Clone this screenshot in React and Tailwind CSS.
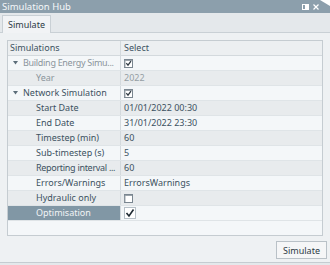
import React from 'react';

const rows = [
  { label: 'Building Energy Simu...', value: 'check', level: 0, expand: true, muted: true, tight: true },
  { label: 'Year', value: '2022', level: 1, muted: true },
  { label: 'Network Simulation', value: 'check', level: 0, expand: true },
  { label: 'Start Date', value: '01/01/2022 00:30', level: 1 },
  { label: 'End Date', value: '31/01/2022 23:30', level: 1 },
  { label: 'Timestep (min)', value: '60', level: 1 },
  { label: 'Sub-timestep (s)', value: '5', level: 1 },
  { label: 'Reporting interval ...', value: '60', level: 1, tight: true },
  { label: 'Errors/Warnings', value: 'ErrorsWarnings', level: 1 },
  { label: 'Hydraulic only', value: 'box', level: 1 },
  { label: 'Optimisation', value: 'edit', level: 1, selected: true },
];

function SmallCheck({ checked }) {
  return (
    <svg width="9" height="9" viewBox="0 0 9 9" className="block">
      <rect x="0.5" y="0.5" width="8" height="8" fill="#ffffff" stroke="#7a8690" />
      <path d="M1 1.5 H8 M1 1.5 V8" stroke="#9aa3aa" />
      {checked && <path d="M2.3 4.2 L4 6.2 L7 2.2" fill="none" stroke="#2f3a42" strokeWidth="1.3" />}
    </svg>
  );
}

function EditCheck() {
  return (
    <svg width="12" height="12" viewBox="0 0 12 12" className="block">
      <rect x="0.5" y="0.5" width="11" height="11" fill="#ffffff" stroke="#b7c0c7" />
      <path d="M2.5 6 L5 9 L9.5 2.5" fill="none" stroke="#1f2a33" strokeWidth="1.6" />
    </svg>
  );
}

export default function App() {
  return (
    <div className="w-[330px] h-[265px] bg-[#eef1f3] flex flex-col overflow-hidden" style={{ fontFamily: '"Noto Sans", Lato, sans-serif' }}>
      {/* title bar */}
      <div className="h-[13px] bg-[#8c9fac] flex items-center pl-[2px] relative">
        <span className="text-[9.5px] leading-[13px] text-[#f4f7f9]">Simulation Hub</span>
        <div className="ml-auto flex items-center gap-[4px] mr-[11px]">
          <svg width="7" height="6" viewBox="0 0 7 6"><rect x="0.5" y="0.5" width="6" height="5" fill="none" stroke="#fff" /><rect x="3" y="0" width="4" height="6" fill="#fff" /></svg>
          <svg width="6" height="6" viewBox="0 0 6 6"><path d="M0.5 0.5 L5.5 5.5 M5.5 0.5 L0.5 5.5" stroke="#fff" strokeWidth="1.2" /></svg>
        </div>
        <div className="absolute right-0 top-0 w-0 h-0 border-t-[6px] border-t-white border-l-[10px] border-l-transparent" />
      </div>

      {/* tab bar */}
      <div className="h-[20px] bg-[#e4e8eb] border-b border-[#c9d0d5] flex items-end pl-[2px]">
        <div className="h-[18px] w-[49px] bg-[#f1f3f5] border border-b-0 border-[#c9d0d5] flex items-center justify-center -mb-px">
          <span className="text-[9px] text-[#2c3a44]">Simulate</span>
        </div>
      </div>

      {/* content */}
      <div className="flex-1 flex flex-col px-[7px] pt-[7px]">
        <div className="w-[316px] h-[196px] border border-[#c5ccd1] bg-[#f4f7f9] text-[9px] leading-[14px]">
          <div className="flex h-[15px] bg-[#eceff1] border-b border-[#d3d9dd] text-[#3c5261]">
            <div className="w-[113px] pl-[2px] flex items-center border-r border-[#d3d9dd]">Simulations</div>
            <div className="pl-[3px] flex items-center">Select</div>
          </div>
          {rows.map((r, i) => (
            <div key={i} className={`flex h-[15px] border-b border-[#dfe4e7] ${i % 2 === 1 ? 'bg-[#e8ebed]' : 'bg-[#f4f7f9]'}`}>
              <div className={`w-[113px] shrink-0 flex items-center border-r border-[#d3d9dd] whitespace-nowrap overflow-hidden ${r.selected ? 'bg-[#8197a5] text-[#f1f4f6]' : r.muted ? 'text-[#8b959c]' : 'text-[#3c5261]'} ${r.level === 0 ? 'pl-[5px]' : 'pl-[28px]'}`}>
                {r.expand && (
                  <svg width="5" height="4" viewBox="0 0 5 4" className="mr-[5px] shrink-0"><path d="M0 0 H5 L2.5 3.5 Z" fill="#5c6e7a" /></svg>
                )}
                <span className={r.tight ? 'tracking-[-0.3px]' : ''}>{r.label}</span>
              </div>
              <div className={`flex-1 flex items-center pl-[3px] ${r.selected ? 'bg-[#f4f7f9]' : ''} ${r.muted ? 'text-[#959ea4]' : 'text-[#3c5261]'}`}>
                {r.value === 'check' && <SmallCheck checked />}
                {r.value === 'box' && <SmallCheck />}
                {r.value === 'edit' && <EditCheck />}
                {!['check', 'box', 'edit'].includes(r.value) && <span>{r.value}</span>}
              </div>
            </div>
          ))}
        </div>
        <div className="flex justify-end mt-[5px] -mr-[4px]">
          <button className="w-[51px] h-[18px] border border-[#b9c1c7] bg-[#f5f6f7] text-[9px] text-[#2c3a44] leading-none">Simulate</button>
        </div>
      </div>
      <div className="h-[3px] border-t border-[#c5ccd1] bg-[#e4e8eb]" />
    </div>
  );
}
